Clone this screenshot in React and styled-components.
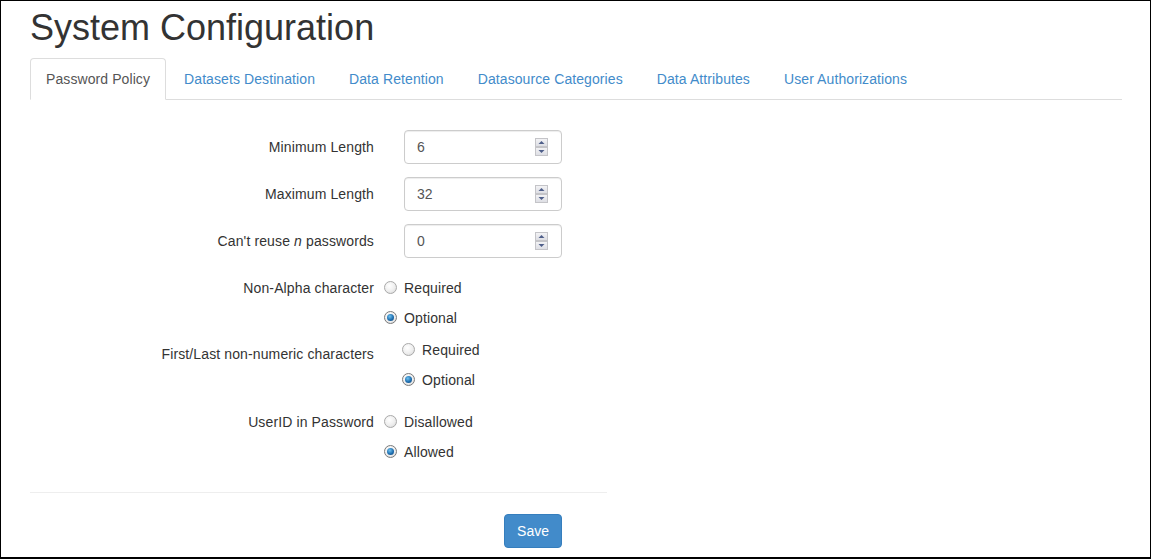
import React from "react";
import styled, { createGlobalStyle } from "styled-components";

const Global = createGlobalStyle`
  html, body { margin: 0; padding: 0; background: #fff; }
  body { font-family: "Liberation Sans", Arial, sans-serif; font-size: 14px; line-height: 20px; color: #333; letter-spacing: 0.12px; }
  * { box-sizing: border-box; }
`;

const Frame = styled.div`
  width: 1151px;
  height: 559px;
  border: solid #000;
  border-width: 1px 1px 2px 1px;
  padding: 7px 28px 0 29px;
  overflow: hidden;
`;

const Title = styled.h1`
  margin: 0 0 10px;
  font-size: 36px;
  line-height: 1.1;
  font-weight: 400;
  letter-spacing: 0;
  color: #333;
`;

const Tabs = styled.ul`
  display: flex;
  list-style: none;
  margin: 0;
  padding: 0;
  border-bottom: 1px solid #ddd;
`;

const TabItem = styled.li`
  margin: 0 2px -1px 0;
`;

const TabLink = styled.a`
  display: block;
  padding: 10px 15px;
  line-height: 20px;
  border: 1px solid ${(p) => (p.$active ? "#ddd" : "transparent")};
  border-bottom-color: ${(p) => (p.$active ? "#fff" : "transparent")};
  border-radius: 4px 4px 0 0;
  background: ${(p) => (p.$active ? "#fff" : "transparent")};
  color: ${(p) => (p.$active ? "#555" : "#428bca")};
  text-decoration: none;
  letter-spacing: 0.09px;
  cursor: pointer;
`;

const Content = styled.div`
  padding-top: 30px;
`;

const Form = styled.form`
  width: 577px;
`;

const Group = styled.div`
  display: grid;
  grid-template-columns: 344px 158px;
  column-gap: 30px;
  margin-bottom: ${(p) => p.$mb}px;
`;

const Label = styled.label`
  text-align: right;
  padding-top: ${(p) => p.$pt}px;
  line-height: 20px;
`;

const InputWrap = styled.div`
  position: relative;
  height: 34px;
`;

const Input = styled.input`
  width: 100%;
  height: 34px;
  padding: 6px 12px;
  border: 1px solid #ccc;
  border-radius: 4px;
  font: 14px/20px "Liberation Sans", Arial, sans-serif;
  color: #555;
  background: #fff;
  box-shadow: inset 0 1px 1px rgba(0, 0, 0, 0.075);
  outline: none;
`;

const SpinBox = styled.svg`
  position: absolute;
  right: 14px;
  top: 8px;
`;

const Spinner = () => (
  <SpinBox width="13" height="18" viewBox="0 0 13 18">
    <defs>
      <linearGradient id="sg" x1="0" y1="0" x2="0" y2="1">
        <stop offset="0" stopColor="#f4f4f6" />
        <stop offset="1" stopColor="#dcdde3" />
      </linearGradient>
    </defs>
    <rect x="0.5" y="0.5" width="12" height="8" fill="url(#sg)" stroke="#c4c4c8" />
    <rect x="0.5" y="9.5" width="12" height="8" fill="url(#sg)" stroke="#c4c4c8" />
    <path d="M6.5 3 L9.5 6 L3.5 6 Z" fill="#4f5f8a" />
    <path d="M6.5 15 L9.5 12 L3.5 12 Z" fill="#4f5f8a" />
  </SpinBox>
);

const RadioList = styled.div`
  display: flex;
  flex-direction: column;
  gap: 10px;
  padding-top: ${(p) => p.$pt}px;
  margin-left: ${(p) => p.$shift}px;
`;

const RadioOption = styled.label`
  display: flex;
  align-items: center;
  height: 20px;
  line-height: 20px;
  cursor: pointer;
`;

const RadioDot = styled.span`
  width: 13px;
  height: 13px;
  border-radius: 50%;
  margin-right: 7px;
  flex: none;
  position: relative;
  border: 1px solid ${(p) => (p.$on ? "#7a7a7a" : "#a9a9a9")};
  background: radial-gradient(circle at 40% 35%, #ffffff 0%, #eeeeee 55%, #d4d4d4 100%);
  &::after {
    content: "";
    display: ${(p) => (p.$on ? "block" : "none")};
    position: absolute;
    left: 2px;
    top: 2px;
    width: 7px;
    height: 7px;
    border-radius: 50%;
    background: radial-gradient(circle at 40% 35%, #6fc2f0 0%, #1f6fb0 55%, #0d3f70 100%);
  }
`;

const Divider = styled.hr`
  margin: 30px 0 21px;
  border: 0;
  border-top: 1px solid #eee;
`;

const Actions = styled.div`
  display: grid;
  grid-template-columns: 344px 158px;
  column-gap: 30px;
`;

const SaveButton = styled.button`
  grid-column: 2;
  justify-self: end;
  height: 34px;
  padding: 6px 12px;
  border: 1px solid #357ebd;
  border-radius: 4px;
  background: #428bca;
  color: #fff;
  font: 14px/20px "Liberation Sans", Arial, sans-serif;
  cursor: pointer;
`;

const tabs = [
  "Password Policy",
  "Datasets Destination",
  "Data Retention",
  "Datasource Categories",
  "Data Attributes",
  "User Authorizations",
];

const numberFields = [
  { label: "Minimum Length", value: "6" },
  { label: "Maximum Length", value: "32" },
  { label: <>Can't reuse <i>n</i> passwords</>, value: "0" },
];

const radioGroups = [
  { label: "Non-Alpha character", options: ["Required", "Optional"], checked: 1, labelPt: 7, pt: 7, shift: -20, mb: 9 },
  { label: "First/Last non-numeric characters", options: ["Required", "Optional"], checked: 1, labelPt: 7, pt: 3, shift: -2, mb: 14 },
  { label: "UserID in Password", options: ["Disallowed", "Allowed"], checked: 1, labelPt: 8, pt: 8, shift: -20, mb: 0 },
];

export default function App() {
  return (
    <>
      <Global />
      <Frame>
        <Title>System Configuration</Title>
        <Tabs>
          {tabs.map((t, i) => (
            <TabItem key={t}>
              <TabLink $active={i === 0}>{t}</TabLink>
            </TabItem>
          ))}
        </Tabs>
        <Content>
          <Form onSubmit={(e) => e.preventDefault()}>
            {numberFields.map((f, i) => (
              <Group key={i} $mb={13}>
                <Label $pt={7}>{f.label}</Label>
                <InputWrap>
                  <Input type="text" defaultValue={f.value} />
                  <Spinner />
                </InputWrap>
              </Group>
            ))}
            {radioGroups.map((g, gi) => (
              <Group key={gi} $mb={g.mb}>
                <Label $pt={g.labelPt}>{g.label}</Label>
                <RadioList $pt={g.pt} $shift={g.shift}>
                  {g.options.map((o, oi) => (
                    <RadioOption key={o}>
                      <RadioDot $on={oi === g.checked} />
                      {o}
                    </RadioOption>
                  ))}
                </RadioList>
              </Group>
            ))}
            <Divider />
            <Actions>
              <SaveButton type="button">Save</SaveButton>
            </Actions>
          </Form>
        </Content>
      </Frame>
    </>
  );
}
